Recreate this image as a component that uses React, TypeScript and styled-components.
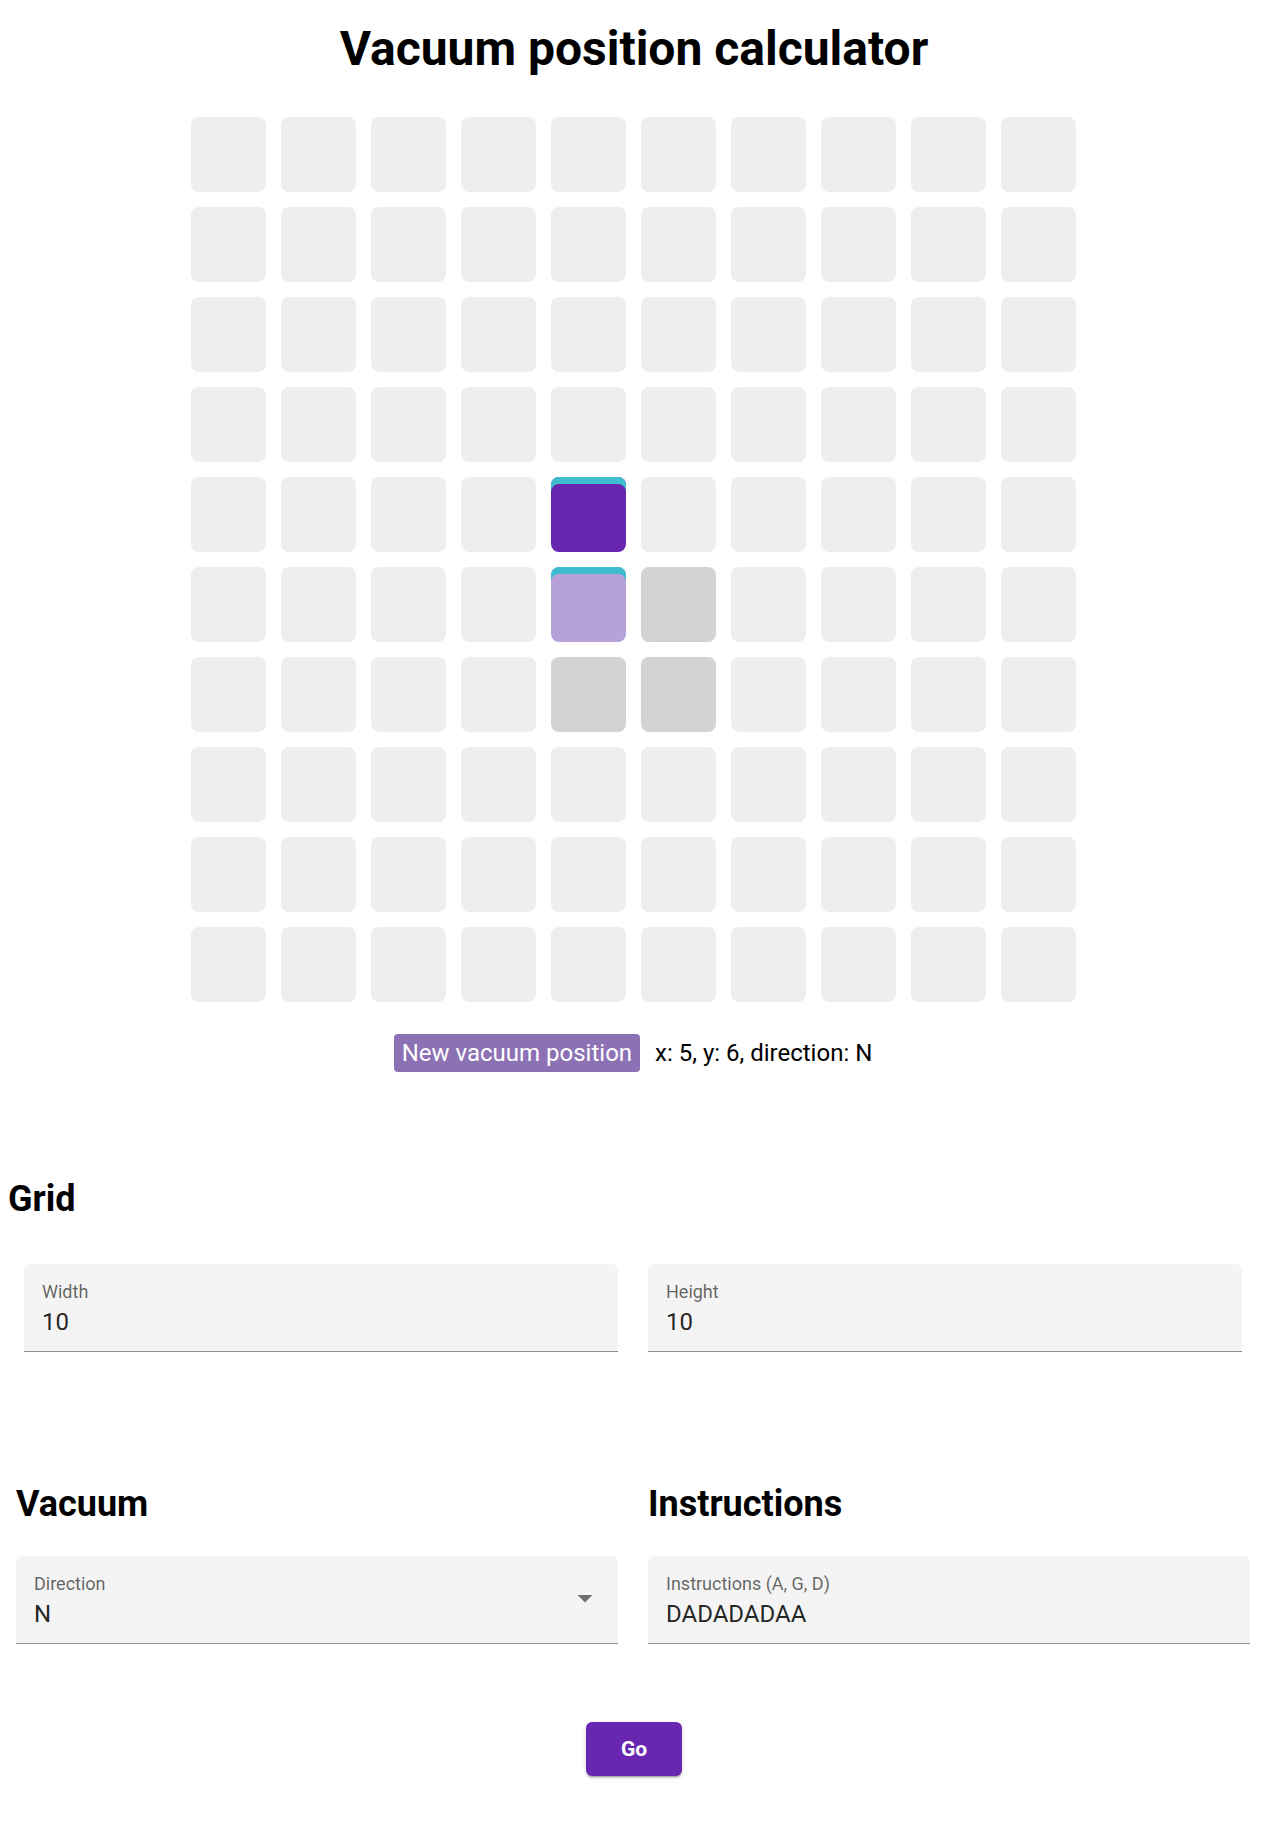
import React from "react";
import styled, { createGlobalStyle } from "styled-components";

const GlobalStyle = createGlobalStyle`
  html, body {
    margin: 0;
    padding: 0;
    background: #ffffff;
  }
  body {
    font-family: Roboto, "Liberation Sans", Arial, sans-serif;
    color: #000;
  }
  * { box-sizing: border-box; }
`;

const Page = styled.main`
  display: flex;
  flex-direction: column;
  width: 1268px;
  padding-bottom: 60px;
`;

const Title = styled.h1`
  margin: 21px 0 0;
  font-size: 48px;
  line-height: 56px;
  font-weight: 700;
  text-align: center;
  color: #000;
`;

const Board = styled.div<{ $cols: number }>`
  align-self: center;
  margin-top: 40px;
  margin-right: 1px;
  display: grid;
  grid-template-columns: repeat(${(p) => p.$cols}, 75px);
  grid-auto-rows: 75px;
  gap: 15px;
`;

type CellKind = "empty" | "visited" | "start" | "current";

const cellColors: Record<CellKind, string> = {
  empty: "#eeeeee",
  visited: "#d3d3d3",
  start: "#b7a1d9",
  current: "#6927b1",
};

const Cell = styled.div<{ $kind: CellKind; $facing?: boolean }>`
  border-radius: 8px;
  background: ${(p) => cellColors[p.$kind]};
  box-shadow: ${(p) => (p.$facing ? "inset 0 7px 0 #3ebdcf" : "none")};
`;

const StatusRow = styled.div`
  margin-top: 32px;
  display: flex;
  justify-content: center;
  align-items: center;
  gap: 15px;
  font-size: 24px;
  padding-right: 2px;
`;

const Badge = styled.span`
  background: #8c72b5;
  color: #ffffff;
  border-radius: 4px;
  padding: 5px 8px;
  line-height: 28px;
  font-size: 24px;
`;

const StatusText = styled.span`
  line-height: 28px;
  color: #000;
`;

const SectionTitle = styled.h2`
  margin: 0;
  font-size: 36px;
  line-height: 42px;
  font-weight: 700;
  color: #000;
`;

const GridSection = styled.section`
  margin-top: 106px;
  display: flex;
  flex-direction: column;
  padding-left: 8px;
`;

const FieldRow = styled.div<{ $left: number; $right: number }>`
  display: grid;
  grid-template-columns: 1fr 1fr;
  column-gap: 30px;
  padding-left: ${(p) => p.$left}px;
  padding-right: ${(p) => p.$right}px;
`;

const GridFields = styled(FieldRow)`
  margin-top: 44px;
`;

const LowerSection = styled(FieldRow)`
  margin-top: 131px;
`;

const Column = styled.div`
  display: flex;
  flex-direction: column;
  gap: 31px;
`;

const Field = styled.div`
  display: flex;
  align-items: center;
  height: 88px;
  background: #f4f4f4;
  border-radius: 6px 6px 0 0;
  border-bottom: 1px solid #8f8f8f;
  padding: 0 15px 0 18px;
`;

const FieldBody = styled.div`
  flex: 1;
  display: flex;
  flex-direction: column;
  align-self: flex-start;
  padding-top: 18px;
`;

const Label = styled.label`
  font-size: 18px;
  line-height: 20px;
  color: rgba(0, 0, 0, 0.6);
`;

const Value = styled.div`
  margin-top: 6px;
  font-size: 24px;
  line-height: 28px;
  color: rgba(0, 0, 0, 0.87);
`;

const ArrowIcon = styled.svg`
  width: 36px;
  height: 36px;
  margin-top: -4px;
  fill: rgba(0, 0, 0, 0.54);
  flex: none;
`;

const Actions = styled.div`
  margin-top: 78px;
  display: flex;
  justify-content: center;
`;

const GoButton = styled.button`
  min-width: 96px;
  padding: 9px 24px;
  font-family: Roboto, "Liberation Sans", Arial, sans-serif;
  font-size: 21px;
  line-height: 36px;
  font-weight: 700;
  color: #ffffff;
  background: #6927b1;
  border: none;
  border-radius: 6px;
  box-shadow: 0 3px 1px -2px rgba(0, 0, 0, 0.2), 0 2px 2px 0 rgba(0, 0, 0, 0.14),
    0 1px 5px 0 rgba(0, 0, 0, 0.12);
  cursor: pointer;
`;

const COLS = 10;
const ROWS = 10;

function kindOf(x: number, y: number): { kind: CellKind; facing: boolean } {
  if (x === 4 && y === 4) return { kind: "current", facing: true };
  if (x === 4 && y === 5) return { kind: "start", facing: true };
  if ((x === 5 && y === 5) || (x === 4 && y === 6) || (x === 5 && y === 6))
    return { kind: "visited", facing: false };
  return { kind: "empty", facing: false };
}

function TextField({ label, value, select }: { label: string; value: string; select?: boolean }) {
  return (
    <Field>
      <FieldBody>
        <Label>{label}</Label>
        <Value>{value}</Value>
      </FieldBody>
      {select && (
        <ArrowIcon viewBox="0 0 24 24">
          <path d="M7 10l5 5 5-5z" />
        </ArrowIcon>
      )}
    </Field>
  );
}

export default function App() {
  const cells = [];
  for (let y = 0; y < ROWS; y++) {
    for (let x = 0; x < COLS; x++) {
      const { kind, facing } = kindOf(x, y);
      cells.push(<Cell key={`${x}-${y}`} $kind={kind} $facing={facing} />);
    }
  }
  return (
    <>
      <GlobalStyle />
      <Page>
        <Title>Vacuum position calculator</Title>
        <Board $cols={COLS}>{cells}</Board>
        <StatusRow>
          <Badge>New vacuum position</Badge>
          <StatusText>x: 5, y: 6, direction: N</StatusText>
        </StatusRow>
        <GridSection>
          <SectionTitle>Grid</SectionTitle>
        </GridSection>
        <GridFields $left={24} $right={26}>
          <TextField label="Width" value="10" />
          <TextField label="Height" value="10" />
        </GridFields>
        <LowerSection $left={16} $right={18}>
          <Column>
            <SectionTitle>Vacuum</SectionTitle>
            <TextField label="Direction" value="N" select />
          </Column>
          <Column>
            <SectionTitle>Instructions</SectionTitle>
            <TextField label="Instructions (A, G, D)" value="DADADADAA" />
          </Column>
        </LowerSection>
        <Actions>
          <GoButton>Go</GoButton>
        </Actions>
      </Page>
    </>
  );
}
